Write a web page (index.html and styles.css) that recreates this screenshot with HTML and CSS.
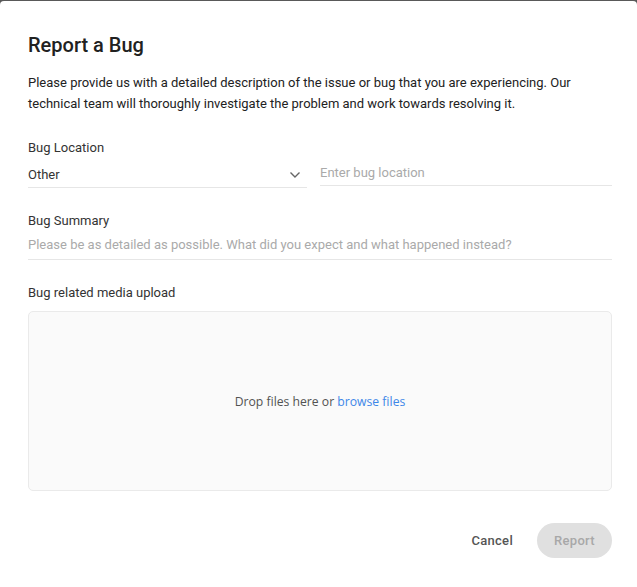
FILE: index.html
```html
<!DOCTYPE html>
<html lang="en">
<head>
    <meta charset="UTF-8">
    <meta name="viewport" content="width=device-width, initial-scale=1.0">
    <title>Report a Bug</title>
    <link rel="stylesheet" href="styles.css">
</head>
<body>

    <!-- Dialog -->
    <div class="dialog">
        <h2 class="dialog-title">Report a Bug</h2>
        <p class="intro">Please provide us with a detailed description of the issue or bug that you are experiencing. Our technical team will thoroughly investigate the problem and work towards resolving it.</p>

        <div class="field first">
            <label>Bug Location</label>
            <div class="location-row">
                <div class="select">
                    <span>Other</span>
                    <svg width="12" height="8" viewBox="0 0 12 8"><path d="M1.5 1.5 L6 6 L10.5 1.5" fill="none" stroke="#666" stroke-width="1.4"/></svg>
                </div>
                <div class="text-input">Enter bug location</div>
            </div>
        </div>

        <div class="field">
            <label>Bug Summary</label>
            <div class="text-input wide">Please be as detailed as possible. What did you expect and what happened instead?</div>
        </div>

        <div class="field">
            <label>Bug related media upload</label>
            <div class="dropzone">
                <span>Drop files here or <a href="#">browse files</a></span>
            </div>
        </div>

        <div class="actions">
            <button class="cancel-btn">Cancel</button>
            <button class="report-btn" disabled>Report</button>
        </div>
    </div>

</body>
</html>
```

FILE: styles.css
```css
body {
    font-family: Roboto, 'Liberation Sans', sans-serif;
    margin: 0;
    padding: 0;
    background-color: #595959;
    height: 587px;
    overflow: hidden;
}
.dialog {
    margin-top: 1px;
    background: #fff;
    border-radius: 4px 4px 0 0;
    height: 586px;
    padding: 32px 25px 0 28px;
    box-sizing: border-box;
}
.dialog-title {
    margin: 0;
    font-size: 20px;
    font-weight: 500;
    line-height: 24px;
    color: #212121;
}
.intro {
    margin: 15px 0 0;
    font-size: 13px;
    line-height: 21px;
    color: #222;
}
.field {
    margin-top: 23px;
}
.field.first {
    margin-top: 24px;
}
.field label {
    display: block;
    font-size: 13px;
    line-height: 20px;
    color: #333;
}
.location-row {
    display: grid;
    grid-template-columns: 279px 1fr;
    gap: 13px;
    align-items: start;
    margin-top: 4px;
}
.select {
    display: flex;
    justify-content: space-between;
    align-items: center;
    font-size: 13px;
    line-height: 20px;
    color: #333;
    padding: 3px 6px 2px 0;
    border-bottom: 1px solid #e6e6e6;
}
.text-input {
    font-size: 13px;
    line-height: 20px;
    color: #aaa;
    padding: 1px 0 2px;
    border-bottom: 1px solid #e6e6e6;
}
.text-input.wide {
    margin-top: 4px;
    padding: 0 0 4px;
}
.dropzone {
    margin-top: 8px;
    height: 180px;
    box-sizing: border-box;
    background: #fafafa;
    border: 1px solid #eaeaea;
    border-radius: 5px;
    display: flex;
    justify-content: center;
    align-items: center;
    font-family: 'Open Sans', 'Noto Sans', sans-serif;
    font-size: 12.2px;
    color: #525252;
}
.dropzone a {
    color: #3d87e8;
    text-decoration: none;
}
.actions {
    display: flex;
    justify-content: flex-end;
    align-items: center;
    gap: 12px;
    margin-top: 32px;
}
button {
    font-family: Roboto, 'Liberation Sans', sans-serif;
    font-size: 13px;
    font-weight: 500;
    border: none;
    cursor: pointer;
    letter-spacing: 0.3px;
}
.cancel-btn {
    background: none;
    color: #555;
    padding: 8px 12px;
}
.report-btn {
    background: #e0e0e0;
    color: #a8a8a8;
    width: 75px;
    height: 35px;
    border-radius: 18px;
}
```
